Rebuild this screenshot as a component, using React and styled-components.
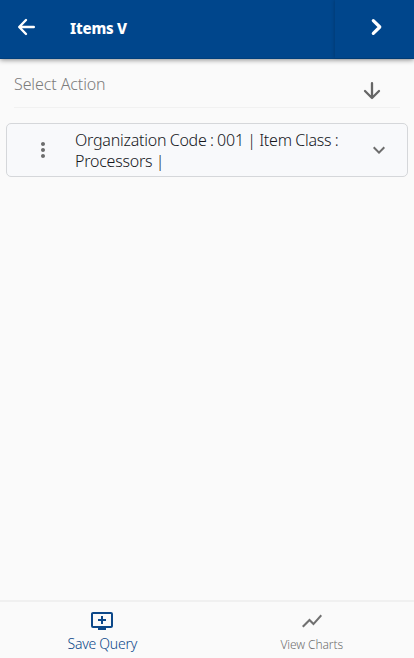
import React from "react";
import styled, { createGlobalStyle } from "styled-components";
import { MdMoreVert, MdExpandMore, MdAddToQueue, MdShowChart } from "react-icons/md";

const GlobalStyle = createGlobalStyle`
  * { box-sizing: border-box; }
  body { margin: 0; background: #fafafa; font-family: "Noto Sans", "Open Sans", sans-serif; }
  svg { display: block; flex: none; }
`;
const Page = styled.div`
  height: 658px;
  display: flex;
  flex-direction: column;
  background: #fafafa;
`;
const Header = styled.header`
  height: 59px;
  flex: none;
  display: flex;
  background: #00468c;
  color: #fff;
  border-bottom: 1px solid #003f7c;
  box-shadow: 0 1px 5px rgba(0, 0, 0, 0.45);
`;
const TitleArea = styled.div`
  flex: 1;
  display: flex;
  align-items: center;
  padding: 0 0 4px 17px;
`;
const Title = styled.h1`
  margin: 1px 0 0 34px;
  font-size: 15px;
  line-height: 20px;
  font-weight: 800;
  letter-spacing: -0.2px;
`;
const NextButton = styled.div`
  width: 79px;
  display: flex;
  align-items: center;
  padding: 0 0 4px 31px;
  box-shadow: -1px 0 3px rgba(0, 0, 0, 0.16);
`;
const ActionSelect = styled.div`
  height: 49px;
  flex: none;
  margin: 0 14px;
  padding: 3px 18px 0 0;
  display: flex;
  align-items: center;
  justify-content: space-between;
  border-bottom: 1px solid #f1f1f1;
  color: #666;
`;
const Label = styled.span`
  color: #7c7c7c;
  font-size: 16px;
  line-height: 22px;
  font-weight: 300;
  letter-spacing: -0.1px;
  padding-bottom: 9px;
  margin-top: 8px;
`;
const ArrowSlot = styled.div`
  margin-top: 12px;
`;
const ItemCard = styled.div`
  height: 54px;
  flex: none;
  margin: 15px 6px 0;
  padding: 0 16px 0 24px;
  display: flex;
  align-items: center;
  background: #f8f9fb;
  border: 1px solid #d5d7da;
  border-radius: 5px;
  color: #6d6d6d;
`;
const ItemText = styled.div`
  flex: 1;
  margin: 2px 0 0 20px;
  font-size: 16px;
  line-height: 21px;
  font-weight: 350;
  letter-spacing: -0.23px;
  word-spacing: -0.5px;
  color: #15171c;
  white-space: nowrap;
`;
const Content = styled.main`
  flex: 1;
`;
const Footer = styled.footer`
  height: 58px;
  flex: none;
  display: flex;
  border-top: 2px solid #f0f0f0;
`;
const Tab = styled.div`
  flex: 1;
  display: flex;
  flex-direction: column;
  align-items: center;
  padding: ${(p) => (p.$active ? "7px 3px 0 0" : "7px 0 0 2px")};
  color: ${(p) => (p.$active ? "#0c4889" : "#707070")};
`;
const TabLabel = styled.span`
  font-size: ${(p) => (p.$active ? "14px" : "12px")};
  line-height: 20px;
  font-weight: 350;
  letter-spacing: ${(p) => (p.$active ? "-0.25px" : "-0.1px")};
  margin-top: ${(p) => (p.$active ? "1px" : "2px")};
`;

export default function App() {
  return (
    <>
      <GlobalStyle />
      <Page>
        <Header>
          <TitleArea>
            <svg width="19" height="18" viewBox="0 0 19 18" fill="none" stroke="currentColor" strokeWidth="2.4" strokeLinecap="round" strokeLinejoin="round">
              <path d="M9 2 2.2 9 9 16M2.7 9H16.8" />
            </svg>
            <Title>Items V</Title>
          </TitleArea>
          <NextButton>
            <svg width="20" height="20" viewBox="0 0 20 20" fill="none" stroke="currentColor" strokeWidth="3.2" strokeLinecap="round" strokeLinejoin="round">
              <path d="M7.3 3.6 13.8 10 7.3 16.4" />
            </svg>
          </NextButton>
        </Header>
        <ActionSelect>
          <Label>Select Action</Label>
          <ArrowSlot>
            <svg width="20" height="20" viewBox="0 0 20 20" fill="none" stroke="currentColor" strokeWidth="2.3" strokeLinecap="round" strokeLinejoin="round">
              <path d="M10 2.2V16.8M3 10 10 17 17 10" />
            </svg>
          </ArrowSlot>
        </ActionSelect>
        <ItemCard>
          <MdMoreVert size={24} />
          <ItemText>
            Organization Code : 001 | Item Class :<br />Processors |
          </ItemText>
          <MdExpandMore size={24} />
        </ItemCard>
        <Content />
        <Footer>
          <Tab $active>
            <MdAddToQueue size={24} />
            <TabLabel $active>Save Query</TabLabel>
          </Tab>
          <Tab>
            <MdShowChart size={24} />
            <TabLabel>View Charts</TabLabel>
          </Tab>
        </Footer>
      </Page>
    </>
  );
}
